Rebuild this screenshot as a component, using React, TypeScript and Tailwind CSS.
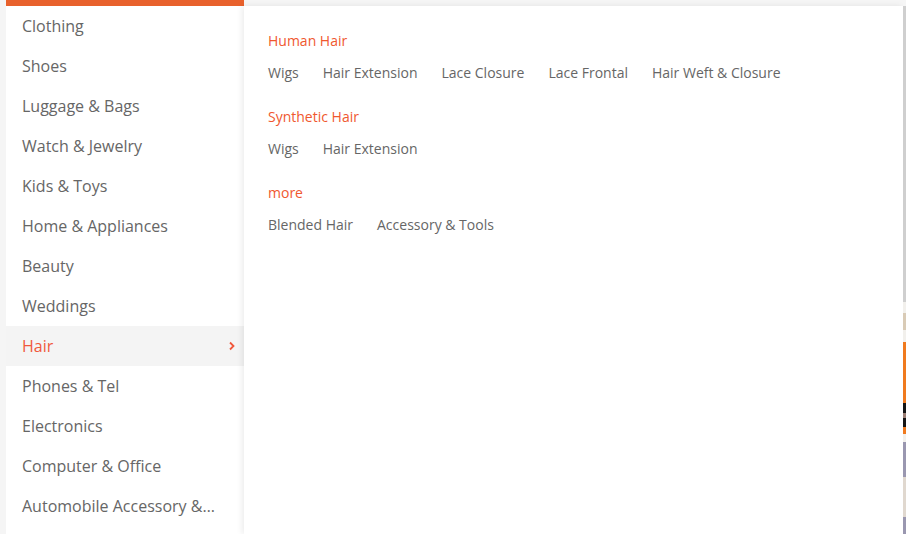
import React from "react";

const cats = [
  "Clothing",
  "Shoes",
  "Luggage & Bags",
  "Watch & Jewelry",
  "Kids & Toys",
  "Home & Appliances",
  "Beauty",
  "Weddings",
  "Hair",
  "Phones & Tel",
  "Electronics",
  "Computer & Office",
  "Automobile Accessory &\u2026",
];

const groups = [
  { title: "Human Hair", links: ["Wigs", "Hair Extension", "Lace Closure", "Lace Frontal", "Hair Weft & Closure"] },
  { title: "Synthetic Hair", links: ["Wigs", "Hair Extension"] },
  { title: "more", links: ["Blended Hair", "Accessory & Tools"] },
];

export default function App() {
  return (
    <div
      className="w-[906px] h-[534px] overflow-hidden bg-[#f5f5f5] flex"
      style={{ fontFamily: '"Open Sans", sans-serif' }}
    >
      <div className="w-[6px] shrink-0" />
      <div className="w-[238px] shrink-0 flex flex-col bg-white">
        <div className="h-[6px] bg-[#e8612c]" />
        {cats.map((c) => {
          const active = c === "Hair";
          return (
            <div
              key={c}
              className={`h-[40px] shrink-0 flex items-center justify-between pl-[16px] pr-[8px] text-[16px] whitespace-nowrap ${
                active ? "bg-[#f4f4f4] text-[#f0583c]" : "text-[#666666]"
              }`}
            >
              <span>{c}</span>
              {active && (
                <svg width="8" height="10" viewBox="0 0 8 10" className="shrink-0">
                  <path d="M2 1.5 L5.5 5 L2 8.5" fill="none" stroke="#f0583c" strokeWidth="1.8" />
                </svg>
              )}
            </div>
          );
        })}
      </div>
      <div className="flex-1 flex flex-col">
        <div className="h-[6px]" />
        <div className="flex-1 flex">
          <div className="w-[659px] shrink-0 bg-white shadow-[-2px_0_6px_rgba(0,0,0,0.08)] pl-[24px] pt-[25px] flex flex-col">
            {groups.map((g) => (
              <div key={g.title} className="flex flex-col mb-[24px]">
                <div className="text-[14px] leading-[20px] text-[#f0582f]">{g.title}</div>
                <div className="flex gap-[24px] mt-[12px] text-[14px] leading-[20px] text-[#666666]">
                  {g.links.map((l) => (
                    <span key={l}>{l}</span>
                  ))}
                </div>
              </div>
            ))}
          </div>
        </div>
      </div>
      <div className="w-[3px] shrink-0 flex flex-col">
        <div className="h-[6px] bg-[#f5f5f5]" />
        <div className="h-[296px] bg-[#cfcfcf]" />
        <div className="h-[11px] bg-[#f2f0ec]" />
        <div className="h-[17px] bg-[#d9cbb6]" />
        <div className="h-[12px] bg-[#f2f0ec]" />
        <div className="h-[61px] bg-[#f07a1e]" />
        <div className="h-[10px] bg-[#151515]" />
        <div className="h-[5px] bg-[#9b7d73]" />
        <div className="h-[9px] bg-[#151515]" />
        <div className="h-[7px] bg-[#f07a1e]" />
        <div className="h-[8px] bg-[#f2f0ec]" />
        <div className="h-[35px] bg-[#9a97b0]" />
        <div className="h-[40px] bg-[#e0d8cf]" />
        <div className="h-[17px] bg-[#9a97b0]" />
      </div>
    </div>
  );
}
